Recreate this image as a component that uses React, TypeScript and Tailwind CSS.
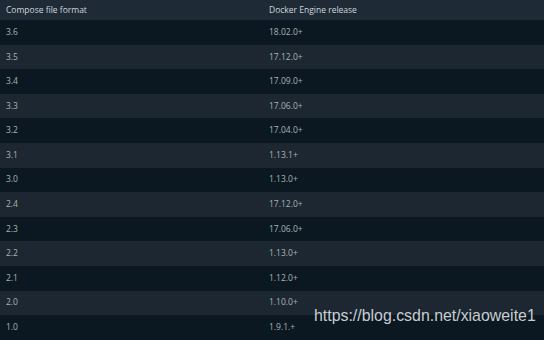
const rows: [string, string][] = [
  ['3.6', '18.02.0+'],
  ['3.5', '17.12.0+'],
  ['3.4', '17.09.0+'],
  ['3.3', '17.06.0+'],
  ['3.2', '17.04.0+'],
  ['3.1', '1.13.1+'],
  ['3.0', '1.13.0+'],
  ['2.4', '17.12.0+'],
  ['2.3', '17.06.0+'],
  ['2.2', '1.13.0+'],
  ['2.1', '1.12.0+'],
  ['2.0', '1.10.0+'],
  ['1.0', '1.9.1.+'],
];

export default function App() {
  return (
    <div className="relative w-[544px] h-[340px] overflow-hidden bg-[#0b1821] font-['Open_Sans',sans-serif] text-[8.5px]">
      {/* header */}
      <div className="flex h-[20px] items-center bg-[#1e2a35] text-[#cfd5db]">
        <div className="w-[263px] pl-[6px]">Compose file format</div>
        <div className="flex-1 pl-[6px]">Docker Engine release</div>
      </div>

      {rows.map(([compose, engine], i) => (
        <div
          key={compose}
          className={
            i % 2 === 0
              ? 'flex h-[24.6px] items-center bg-[#0b1821] text-[#a9b2ba]'
              : 'flex h-[24.6px] items-center bg-[#1c2731] text-[#a9b2ba]'
          }
        >
          <div className="w-[263px] pl-[6px]">{compose}</div>
          <div className="flex-1 pl-[6px]">{engine}</div>
        </div>
      ))}

      {/* watermark */}
      <div className="absolute left-[314px] top-[308px] font-['Liberation_Sans',sans-serif] text-[15.9px] leading-none text-[#c9cdd1]">
        https://blog.csdn.net/xiaoweite1
      </div>
    </div>
  );
}
